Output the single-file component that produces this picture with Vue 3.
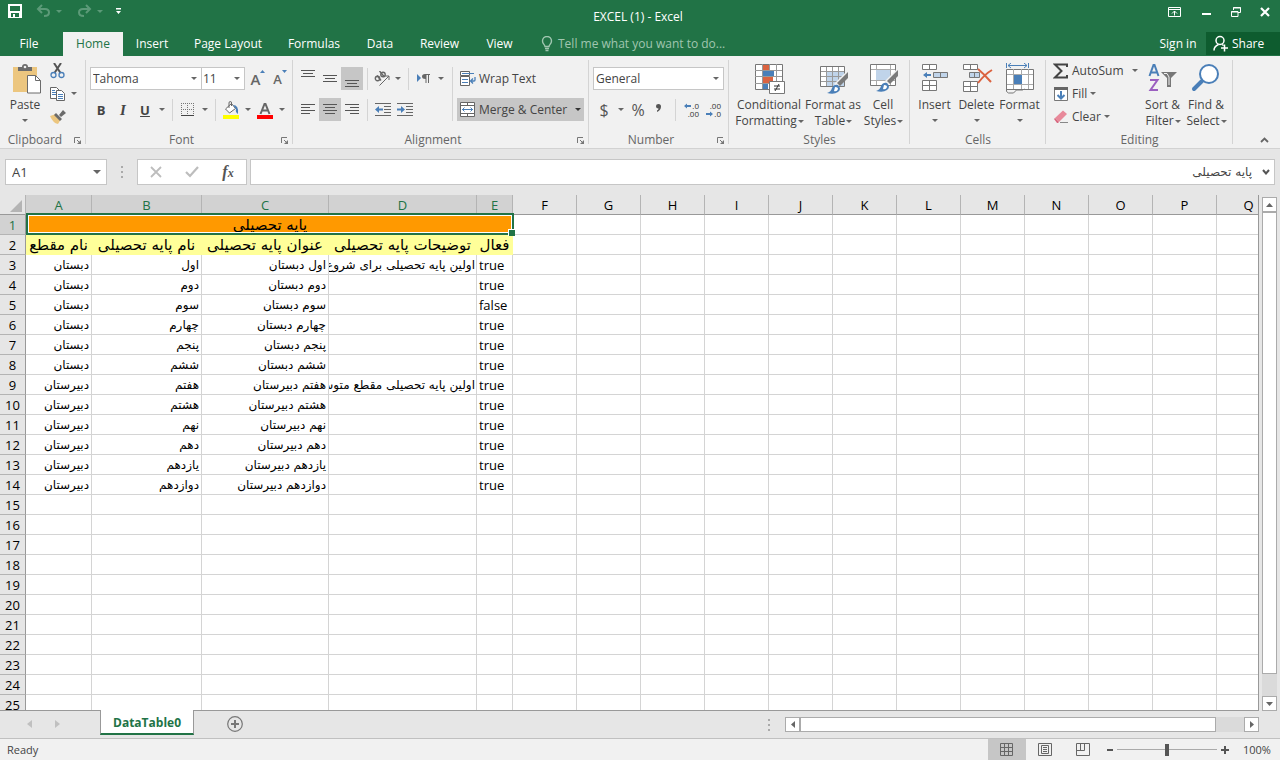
<script setup>
import { ref } from 'vue'

const tabs = ['Home', 'Insert', 'Page Layout', 'Formulas', 'Data', 'Review', 'View']
const columns = 'ABCDEFGHIJKLMNOPQ'.split('')
const title = 'پایه تحصیلی'
const headings = ['نام مقطع', 'نام پایه تحصیلی', 'عنوان پایه تحصیلی', 'توضیحات پایه تحصیلی', 'فعال']
const primary = 'دبستان'
const secondary = 'دبیرستان'
const grades = [
  ['اول', primary, 'اولین پایه تحصیلی برای شروع', 'true'],
  ['دوم', primary, '', 'true'],
  ['سوم', primary, '', 'false'],
  ['چهارم', primary, '', 'true'],
  ['پنجم', primary, '', 'true'],
  ['ششم', primary, '', 'true'],
  ['هفتم', secondary, 'اولین پایه تحصیلی مقطع متوسطه', 'true'],
  ['هشتم', secondary, '', 'true'],
  ['نهم', secondary, '', 'true'],
  ['دهم', secondary, '', 'true'],
  ['یازدهم', secondary, '', 'true'],
  ['دوازدهم', secondary, '', 'true'],
]
const records = grades.map(([name, school, note, active]) => [school, name, `${name} ${school}`, note, active])
const emptyRows = Array.from({ length: 11 }, (_, i) => i + 15)

const font = ref('Tahoma')
const size = ref('11')
const format = ref('General')
const cellName = ref('A1')
const formula = ref(title)
const zoom = ref(100)
</script>

<template>
  <div class="app">
    <header class="top">
      <div class="titlebar">
        <div class="quick">
          <button class="q-save" aria-label="Save">
            <svg width="14" height="14" viewBox="0 0 14 14"><path d="M0 0h14v14H0zM2 2v5h10V2zM3 9v4h2v-3h2v3h4V9z" fill="#fff" fill-rule="evenodd" /></svg>
          </button>
          <button class="q-undo" aria-label="Undo">
            <svg width="15" height="14" viewBox="0 0 15 14" fill="none" stroke="#5c9a78" stroke-width="2"><path d="M6 1 2 5l4 4M2 5h7q4 0 4 3.500t-5 3.500" /></svg>
          </button>
          <i class="caret dim" />
          <button class="q-redo" aria-label="Redo">
            <svg width="15" height="14" viewBox="0 0 15 14" fill="none" stroke="#5c9a78" stroke-width="2"><path d="M9 1l4 4-4 4M13 5H6Q2 5 2 8.500T7 12" /></svg>
          </button>
          <i class="caret dim" />
          <button class="q-more" aria-label="Customize Quick Access Toolbar">
            <svg width="7" height="7" viewBox="0 0 7 7" fill="#fff"><path d="M1 0h5v1.500H1zM1 3h5L3.500 6z" /></svg>
          </button>
        </div>
        <h1>EXCEL (1) - Excel</h1>
        <div class="window">
          <button aria-label="Ribbon Display Options">
            <svg width="14" height="12" viewBox="0 0 14 12" fill="none" stroke="#fff"><path d="M.5 1.500h12v9H.5zM.5 3.500h12M6.500 9.500V5M4 7.500 6.500 5 9 7.500" /></svg>
          </button>
          <button aria-label="Minimize"><svg width="14" height="12" viewBox="0 0 14 12"><path d="M2 7h9v2H2z" fill="#fff" /></svg></button>
          <button aria-label="Restore">
            <svg width="14" height="12" viewBox="0 0 14 12" fill="none" stroke="#fff"><path d="M4.500 4V1.500h7v5H9M4 2h8M2.500 5.500H9v5H2.500zM2 6h7" /></svg>
          </button>
          <button aria-label="Close"><svg width="14" height="12" viewBox="0 0 14 12"><path d="m3 2 8 8m0-8-8 8" stroke="#fff" stroke-width="2.200" /></svg></button>
        </div>
      </div>
      <nav class="tabs">
        <button class="file">File</button>
        <div class="tablist">
          <button v-for="(tab, i) in tabs" :key="tab" :class="{ active: i === 0 }">{{ tab }}</button>
        </div>
        <button class="tell">
          <svg width="12" height="16" viewBox="0 0 12 16" fill="none" stroke="#a0c6b0" stroke-width="1.400"><path d="M4 10.500C4 8.500 1.500 8 1.500 5a4.500 4.500 0 0 1 9 0c0 3-2.500 3.500-2.500 5.500zM4 12.500h4M4.500 14.500h3" /></svg>
          <span>Tell me what you want to do...</span>
        </button>
        <button class="signin">Sign in</button>
        <button class="share">
          <svg width="16" height="17" viewBox="0 0 16 17" fill="none" stroke="#fff" stroke-width="1.500"><circle cx="7" cy="5.500" r="4" /><path d="M1 15.500c0-3 2-5 4.500-6M9 9.500l1.500 1M11.500 9.500v7M8 13h7" /></svg>
          <span>Share</span>
        </button>
      </nav>
    </header>

    <section class="ribbon">
      <div class="group g-clipboard">
        <div class="body">
          <button class="big">
            <svg width="32" height="32" viewBox="0 0 32 32"><path d="M4 4h24v25H4z" fill="#ecc67f" /><path d="M9 8V4h4q0-3 3-3t3 3h4v4z" fill="#6b6b6b" /><circle cx="16" cy="4" r="1.300" fill="#f1f1f1" /><path d="M18.500 12.500h8l5 5v12.500h-13z" fill="#fff" stroke="#6b6b6b" /><path d="M26.500 12.500v5h5" fill="none" stroke="#6b6b6b" /></svg>
            <span>Paste</span><i class="caret" />
          </button>
          <div class="stack">
            <div><button class="mini" aria-label="Cut">
              <svg width="16" height="16" viewBox="0 0 16 16" fill="none"><path d="m4 0 6.500 10M11 0 4.500 10" stroke="#555" stroke-width="2" /><circle cx="3.500" cy="12" r="2.500" stroke="#4a7fb8" stroke-width="1.300" /><circle cx="11.500" cy="12" r="2.500" stroke="#4a7fb8" stroke-width="1.300" /></svg>
            </button></div>
            <div><button class="mini" aria-label="Copy">
              <svg width="16" height="16" viewBox="0 0 16 16"><path d="M.5 1.500h6l3 3v8h-9z" fill="#fff" stroke="#666" /><path d="M2 4.500h3m-3 2h4m-4 2h4" stroke="#4a7fb8" /><path d="M6.500 4.500h5l3 3v7h-8z" fill="#fff" stroke="#666" /><path d="M8 8.500h5m-5 2h5m-5 2h5" stroke="#4a7fb8" /></svg>
            </button><i class="caret" /></div>
            <div><button class="mini" aria-label="Format Painter">
              <svg width="16" height="16" viewBox="0 0 16 16"><path d="M0 7 6 5l5 5-3 5q-5-1-8-8z" fill="#ecc67f" /><path d="m6 4 6 6-2 2-6-6zM9 6l4-5 3 3-5 4z" fill="#6b6b6b" /></svg>
            </button></div>
          </div>
        </div>
        <footer><span>Clipboard</span><svg class="launch" width="8" height="8" viewBox="0 0 8 8"><path d="M.5 6V.5H6M3 3l3 3" fill="none" stroke="#777" /><path d="M7 3v4H3z" fill="#777" /></svg></footer>
      </div>

      <div class="group g-font">
        <div class="body lines">
          <div class="line">
            <label class="combo c-font"><select v-model="font" aria-label="Font"><option>Tahoma</option></select><i class="caret" /></label>
            <label class="combo c-size"><select v-model="size" aria-label="Font size"><option>11</option></select><i class="caret" /></label>
            <button class="tool grow" aria-label="Increase Font Size"><b class="fa">A</b><svg width="5" height="3" viewBox="0 0 5 3"><path d="M0 3h5L2.500 0z" fill="#4a7fb8" /></svg></button>
            <button class="tool grow small" aria-label="Decrease Font Size"><b class="fa">A</b><svg width="5" height="3" viewBox="0 0 5 3"><path d="M0 0h5L2.500 3z" fill="#4a7fb8" /></svg></button>
          </div>
          <div class="line">
            <button class="tool"><b>B</b></button>
            <button class="tool"><em>I</em></button>
            <button class="tool"><b><u>U</u></b></button>
            <i class="caret" /><i class="sep" />
            <button class="tool" aria-label="Borders">
              <svg width="14" height="14" viewBox="0 0 14 14"><path d="M.5 0v12M6.500 0v12M12.500 0v12M0 .5h13M0 6.500h13" stroke="#777" stroke-dasharray="1 1" /><path d="M0 12.500h13" stroke="#444" /></svg>
            </button>
            <i class="caret" /><i class="sep" />
            <button class="tool" aria-label="Fill Color">
              <svg width="16" height="18" viewBox="0 0 16 18"><path d="m2.500 8 6-5.500 4 5L6.500 12z" fill="#fff" stroke="#666" /><path d="M6 7V2q0-1.500 1.300-1.500T8.500 2v3" fill="none" stroke="#666" /><path d="M10 4q6 0 5 9-3-2-2-5z" fill="#4a7fb8" /><path d="M0 14h16v4H0z" fill="#ff0" /></svg>
            </button>
            <i class="caret" />
            <button class="tool" aria-label="Font Color">
              <svg width="16" height="18" viewBox="0 0 16 18"><path d="m3.500 13 4-10h1l4 10M5 9.500h6" fill="none" stroke="#666" stroke-width="2" /><path d="M0 14h16v4H0z" fill="#f00" /></svg>
            </button>
            <i class="caret" />
          </div>
        </div>
        <footer><span>Font</span><svg class="launch" width="8" height="8" viewBox="0 0 8 8"><path d="M.5 6V.5H6M3 3l3 3" fill="none" stroke="#777" /><path d="M7 3v4H3z" fill="#777" /></svg></footer>
      </div>

      <div class="group g-align">
        <div class="body lines">
          <div class="line">
            <div class="alignleft">
              <div class="line">
                <button class="tool" aria-label="Top Align"><svg width="14" height="18" viewBox="0 0 14 18" stroke="#555"><path d="M0 .5h14M2 3.500h10M0 6.500h14" /></svg></button>
                <button class="tool" aria-label="Middle Align"><svg width="14" height="18" viewBox="0 0 14 18" stroke="#555"><path d="M0 5.500h14M2 8.500h10M0 11.500h14" /></svg></button>
                <button class="tool on" aria-label="Bottom Align"><svg width="14" height="18" viewBox="0 0 14 18" stroke="#555"><path d="M0 10.500h14M2 13.500h10M0 16.500h14" /></svg></button>
                <i class="sep" />
                <button class="tool orient" aria-label="Orientation">
                  <svg width="16" height="15" viewBox="0 0 16 15" fill="none" stroke="#666"><path d="M5.500 14.500 15 5M11 5h4v4" /><circle cx="3.500" cy="7.500" r="2.200" stroke-width="1.400" /><path d="m3 4.500 4 5M5.500 0l5 6" stroke-width="1.400" /><circle cx="9" cy="3.500" r="2.200" stroke-width="1.400" /></svg>
                </button>
                <i class="caret" /><i class="sep" />
                <button class="tool" aria-label="Text Direction">
                  <svg width="14" height="12" viewBox="0 0 14 12"><path d="M0 1v8l4-4z" fill="#4a7fb8" /><path d="M5 3.500Q5 1 8 1h5v1h-1v8h-1V2H9.500v8h-1V6Q5 6 5 3.500z" fill="#666" /></svg>
                </button>
                <i class="caret" />
              </div>
              <div class="line">
                <button class="tool" aria-label="Align Left"><svg width="14" height="14" viewBox="0 0 14 14" stroke="#555"><path d="M0 1.500h14M0 4.500h9M0 7.500h14M0 10.500h9" /></svg></button>
                <button class="tool on" aria-label="Center"><svg width="14" height="14" viewBox="0 0 14 14" stroke="#555"><path d="M0 1.500h14M2 4.500h10M0 7.500h14M2 10.500h10" /></svg></button>
                <button class="tool" aria-label="Align Right"><svg width="14" height="14" viewBox="0 0 14 14" stroke="#555"><path d="M0 1.500h14M5 4.500h9M0 7.500h14M5 10.500h9" /></svg></button>
                <i class="sep" />
                <button class="tool" aria-label="Decrease Indent"><svg width="16" height="14" viewBox="0 0 16 14"><path d="M0 .5h16M9 3.500h7M9 6.500h7M9 9.500h7M0 12.500h16" stroke="#666" /><path d="M0 6.500 4 3v2.500h4v2H4V10z" fill="#4a7fb8" /></svg></button>
                <button class="tool" aria-label="Increase Indent"><svg width="16" height="14" viewBox="0 0 16 14"><path d="M0 .5h16M9 3.500h7M9 6.500h7M9 9.500h7M0 12.500h16" stroke="#666" /><path d="M8 6.500 4 3v2.500H0v2h4V10z" fill="#4a7fb8" /></svg></button>
              </div>
            </div>
            <i class="sep tall" />
            <div class="alignright">
              <button class="wide">
                <svg width="16" height="16" viewBox="0 0 16 16"><path d="M.5.500h9v4h-9zM.5 5.500h9v9h-9z" fill="#fff" stroke="#666" /><path d="M2 2.500h12M2 8.500h6M2 11.500h6" stroke="#4a7fb8" /><path d="M15 6v3q0 1-1 1h-3m2-2.500L10.500 10l2.500 2.500" fill="none" stroke="#4a7fb8" stroke-width="1.300" /></svg>
                <span>Wrap Text</span>
              </button>
              <button class="wide on">
                <svg width="16" height="16" viewBox="0 0 16 16"><path d="M.5.500h14v14H.5z" fill="#fff" stroke="#666" /><path d="M0 3.500h15M0 11.500h15M7.500 0v3.500M7.500 11.500V15" stroke="#666" /><path d="M2 7.500h11M4.500 5.500l-2 2 2 2m6-4 2 2-2 2" fill="none" stroke="#4a7fb8" /></svg>
                <span>Merge &amp; Center</span><i class="caret dark" />
              </button>
            </div>
          </div>
        </div>
        <footer><span>Alignment</span><svg class="launch" width="8" height="8" viewBox="0 0 8 8"><path d="M.5 6V.5H6M3 3l3 3" fill="none" stroke="#777" /><path d="M7 3v4H3z" fill="#777" /></svg></footer>
      </div>

      <div class="group g-number">
        <div class="body lines">
          <div class="line"><label class="combo c-format"><select v-model="format" aria-label="Number format"><option>General</option></select><i class="caret" /></label></div>
          <div class="line">
            <button class="tool sym">$</button><i class="caret" />
            <button class="tool sym">%</button>
            <button class="tool comma" aria-label="Comma Style"><svg width="6" height="12" viewBox="0 0 6 12"><path d="M0 2q0-2 2.500-2T5 2.500Q5 6 1 8V6.500Q2.500 6 2.500 4.500 0 4.500 0 2z" fill="#555" /></svg></button>
            <i class="sep" />
            <button class="tool dec" aria-label="Increase Decimal"><span><svg width="8" height="6" viewBox="0 0 8 6"><path d="M0 3 3 .5V2h4v2H3v1.500z" fill="#4a7fb8" /></svg>.0</span><span>.00</span></button>
            <button class="tool dec" aria-label="Decrease Decimal"><span>.00</span><span><svg width="8" height="6" viewBox="0 0 8 6"><path d="M7 3 4 .5V2H0v2h4v1.500z" fill="#4a7fb8" /></svg>.0</span></button>
          </div>
        </div>
        <footer><span>Number</span><svg class="launch" width="8" height="8" viewBox="0 0 8 8"><path d="M.5 6V.5H6M3 3l3 3" fill="none" stroke="#777" /><path d="M7 3v4H3z" fill="#777" /></svg></footer>
      </div>

      <div class="group g-styles">
        <div class="body">
          <button class="big">
            <svg width="32" height="32" viewBox="0 0 32 32"><path d="M2.500 1.500h27v25h-27z" fill="#fff" stroke="#777" /><path d="M9.500 1v25M16.500 1v25M23.500 1v25M2 7.500h27M2 13.500h27M2 20.500h27" stroke="#999" /><path d="M10 2h6v5h-6zM10 14h10v6H10z" fill="#db6340" /><path d="M10 8h11v5H10zM10 21h5v5h-5z" fill="#4a7fb8" /><path d="M16.500 18.500h15v12h-15z" fill="#fff" stroke="#777" /><path d="M21 23h6m-6 3h6m-1-5-4 7" stroke="#333" /></svg>
            <span>Conditional</span><span>Formatting<i class="caret" /></span>
          </button>
          <button class="big">
            <svg width="32" height="32" viewBox="0 0 32 32"><path d="M3.500 3.500h24v20h-24z" fill="#fff" stroke="#777" /><path d="M10 9h17v14H10z" fill="#c0d4ea" /><path d="M9.500 4v19M15.500 4v19M21.500 4v19M4 8.500h23M4 13.500h23M4 18.500h23" stroke="#999" /><path d="m17 21 12-12 3-3v7l-11 11z" fill="#f1f1f1" /><path d="m20 20 11-11v6l-8 8z" fill="#7a7a7a" /><path d="M10 30q4-1 5-5 2-4 6-3 4 4 0 7-4 3-11 1z" fill="#4a7fb8" /><path d="M18 24q3 0 3 2-1 3-4 2z" fill="#fff" /></svg>
            <span>Format as</span><span>Table<i class="caret" /></span>
          </button>
          <button class="big">
            <svg width="32" height="32" viewBox="0 0 32 32"><path d="M3.500 1.500h25v21h-25z" fill="#fff" stroke="#777" /><path d="M9.500 2v20M23.500 2v20M4 6.500h24M4 17.500h24" stroke="#aaa" /><path d="M9 7h14v10H9z" fill="#c0d4ea" /><path d="m17 19 12-12 3-3v7l-11 11z" fill="#f1f1f1" /><path d="m20 18 11-11v6l-8 8z" fill="#7a7a7a" /><path d="M9 28q4-1 5-5 2-4 6-3 4 4 0 7-4 3-11 1z" fill="#4a7fb8" /><path d="M17 22q3 0 3 2-1 3-4 2z" fill="#fff" /></svg>
            <span>Cell</span><span>Styles<i class="caret" /></span>
          </button>
        </div>
        <footer><span>Styles</span></footer>
      </div>

      <div class="group g-cells">
        <div class="body">
          <button class="big">
            <svg width="32" height="32" viewBox="0 0 32 32" stroke="#777"><path d="M3.500 1.500h14v5h-14zM3.500 17.500h14v10h-14z" fill="#fff" /><path d="M10.500 1.500v5M10.500 17.500v10M3.500 22.500h14" /><path d="M14.500 9.500h14v5h-14z" fill="#c0d4ea" /><path d="M21.500 9.500v5" /><path d="M4 12 8 9v2h4v2H8v2z" fill="#4a7fb8" stroke="none" /></svg>
            <span>Insert</span><i class="caret" />
          </button>
          <button class="big">
            <svg width="32" height="32" viewBox="0 0 32 32" stroke="#777"><path d="M2.500 1.500h14v5h-14zM2.500 18.500h14v10h-14z" fill="#fff" /><path d="M9.500 1.500v5M9.500 18.500v10M2.500 23.500h14" /><path d="M8.500 9.500h10v5h-10z" fill="#c0d4ea" /><path d="M13.500 9.500v5" /><path d="M17 6q6 5 13 13M31 7q-7 4-14 13" fill="none" stroke="#db6340" stroke-width="2" /></svg>
            <span>Delete</span><i class="caret" />
          </button>
          <button class="big">
            <svg width="32" height="32" viewBox="0 0 32 32"><path d="M2.500 6.500h27v20h-27z" fill="#fff" stroke="#777" /><path d="M9.500 6v20M17.500 6v20M24.500 6v20M3 11.500h26M3 21.500h26" stroke="#aaa" /><path d="M10 12h8v9h-8z" fill="#4a7fb8" /><path d="M2.500 0v5M24.500 0v5M4 2.500h19M7 0 4 2.500 7 5M20 0l3 2.500L20 5" fill="none" stroke="#4a7fb8" /><path d="M2.500 26q-1 3 2 4h5l3-3h6l2-1" fill="none" stroke="#777" /></svg>
            <span>Format</span><i class="caret" />
          </button>
        </div>
        <footer><span>Cells</span></footer>
      </div>

      <div class="group g-editing">
        <div class="body">
          <div class="edits">
            <button class="edit auto">
              <svg width="16" height="16" viewBox="0 0 16 16"><path d="M14 4V1.500H2L8.500 8 2 14.500h12V12" fill="none" stroke="#444" stroke-width="2" /></svg>
              <span>AutoSum</span><i class="caret" />
            </button>
            <button class="edit">
              <svg width="16" height="16" viewBox="0 0 16 16"><path d="M1.500 1.500h13v13h-13z" fill="#fff" stroke="#777" /><path d="M1 1h14v3H1z" fill="#666" /><path d="M8 5v8M4.500 9 8 12.500 11.500 9" fill="none" stroke="#4a7fb8" stroke-width="2" /></svg>
              <span>Fill</span><i class="caret" />
            </button>
            <button class="edit">
              <svg width="16" height="16" viewBox="0 0 16 16"><path d="m2 9 8-7.500L14 5l-8 8z" fill="#e8899a" /><path d="m1 10 1-1 4 4-1 1H4z" fill="#d8677f" /><path d="M7 13.500h8" stroke="#888" /></svg>
              <span>Clear</span><i class="caret" />
            </button>
          </div>
          <button class="big">
            <svg width="32" height="32" viewBox="0 0 32 32" fill="none"><path d="M2.500 13 6.500 2h1l4 11M4 9.500h6" stroke="#4a7fb8" stroke-width="2" /><path d="M3 17h7.500L3.500 27H11" stroke="#9b5fc0" stroke-width="2" /><path d="M14 9h16l-6 6v9h-4v-9z" fill="#777" /><path d="M17 10.500h3l2 3.500v8" stroke="#f1f1f1" /></svg>
            <span>Sort &amp;</span><span>Filter<i class="caret" /></span>
          </button>
          <button class="big">
            <svg width="32" height="32" viewBox="0 0 32 32"><path d="m4 26 8-8" stroke="#4a7fb8" stroke-width="4" stroke-linecap="round" /><circle cx="19" cy="11" r="9" fill="#fff" stroke="#4a7fb8" stroke-width="2" /></svg>
            <span>Find &amp;</span><span>Select<i class="caret" /></span>
          </button>
        </div>
        <footer><span>Editing</span></footer>
      </div>
      <button class="collapse" aria-label="Collapse the Ribbon"><svg width="9" height="6" viewBox="0 0 9 6"><path d="m1 5 3.500-3.500L8 5" fill="none" stroke="#666" stroke-width="1.800" /></svg></button>
    </section>

    <section class="formulabar">
      <label class="namebox"><input v-model="cellName" aria-label="Name box" /><i class="caret big-caret" /></label>
      <i class="dots" />
      <div class="entry">
        <button aria-label="Cancel"><svg width="12" height="12" viewBox="0 0 12 12"><path d="m1 1 10 10m0-10L1 11" stroke="#bdbdbd" stroke-width="1.800" /></svg></button>
        <button aria-label="Enter"><svg width="14" height="12" viewBox="0 0 14 12"><path d="m1 6 4 4 8-9" fill="none" stroke="#bdbdbd" stroke-width="2.200" /></svg></button>
        <button class="fx" aria-label="Insert Function"><em>f<small>x</small></em></button>
      </div>
      <div class="formula">
        <input v-model="formula" dir="rtl" aria-label="Formula" />
        <svg width="8" height="6" viewBox="0 0 8 6"><path d="m1 1 3 3.500L7 1" fill="none" stroke="#555" stroke-width="2" /></svg>
      </div>
    </section>

    <main class="sheet">
      <div class="viewport">
        <table>
          <colgroup><col class="w-head" /><col class="w-a" /><col class="w-b" /><col class="w-c" /><col class="w-d" /><col class="w-e" /><col v-for="n in 12" :key="n" class="w-rest" /></colgroup>
          <thead>
            <tr>
              <th class="corner"><svg width="12" height="12" viewBox="0 0 12 12"><path d="M12 0v12H0z" fill="#b4b4b4" /></svg></th>
              <th v-for="(c, i) in columns" :key="c" scope="col" :class="{ sel: i < 5 }">{{ c }}</th>
            </tr>
          </thead>
          <tbody>
            <tr>
              <th scope="row" class="sel">1</th>
              <td colspan="5" class="title" dir="rtl">{{ title }}<div class="selection" /></td>
              <td v-for="n in 12" :key="n" />
            </tr>
            <tr class="heads">
              <th scope="row">2</th>
              <td v-for="h in headings" :key="h" class="heading" dir="rtl">{{ h }}</td>
              <td v-for="n in 12" :key="n" />
            </tr>
            <tr v-for="(r, i) in records" :key="i">
              <th scope="row">{{ i + 3 }}</th>
              <td v-for="(v, j) in r" :key="j" :dir="j < 4 ? 'rtl' : 'ltr'" :class="{ fa: j < 4 }">{{ v }}</td>
              <td v-for="n in 12" :key="'e' + n" />
            </tr>
            <tr v-for="n in emptyRows" :key="'r' + n">
              <th scope="row">{{ n }}</th>
              <td v-for="m in 17" :key="m" />
            </tr>
          </tbody>
        </table>
      </div>
      <div class="vscroll">
        <button aria-label="Scroll up"><svg width="7" height="4" viewBox="0 0 7 4"><path d="M0 4h7L3.500 0z" fill="#666" /></svg></button>
        <div class="thumb" />
        <div class="track" />
        <button aria-label="Scroll down"><svg width="7" height="4" viewBox="0 0 7 4"><path d="M0 0h7L3.500 4z" fill="#666" /></svg></button>
      </div>
    </main>

    <section class="sheetbar">
      <div class="nav">
        <button aria-label="Previous sheet"><svg width="5" height="8" viewBox="0 0 5 8"><path d="M5 0v8L0 4z" fill="#c0c0c0" /></svg></button>
        <button aria-label="Next sheet"><svg width="5" height="8" viewBox="0 0 5 8"><path d="M0 0v8l5-4z" fill="#c0c0c0" /></svg></button>
      </div>
      <button class="sheettab">DataTable0</button>
      <button class="add" aria-label="New sheet"><svg width="16" height="16" viewBox="0 0 16 16" fill="none" stroke="#777"><circle cx="8" cy="8" r="7.300" stroke-width="1.200" /><path d="M8 4v8M4 8h8" stroke-width="2" /></svg></button>
      <i class="dots" />
      <div class="hscroll">
        <button aria-label="Scroll left"><svg width="4" height="7" viewBox="0 0 4 7"><path d="M4 0v7L0 3.500z" fill="#666" /></svg></button>
        <div class="thumb" />
        <div class="track" />
        <button aria-label="Scroll right"><svg width="4" height="7" viewBox="0 0 4 7"><path d="M0 0v7l4-3.500z" fill="#666" /></svg></button>
      </div>
    </section>

    <footer class="status">
      <span class="ready">Ready</span>
      <button class="view on" aria-label="Normal"><svg width="14" height="14" viewBox="0 0 14 14" fill="none" stroke="#666"><path d="M.5.500h12v12H.5zM4.500 0v13M8.500 0v13M0 4.500h13M0 8.500h13" /></svg></button>
      <button class="view" aria-label="Page Layout"><svg width="14" height="14" viewBox="0 0 14 14" fill="none" stroke="#666"><path d="M.5.500h13v12H.5zM3.500 2.500h7v8h-7zM5 4.500h4M5 6.500h4M5 8.500h4" /></svg></button>
      <button class="view" aria-label="Page Break Preview"><svg width="14" height="14" viewBox="0 0 14 14" fill="none" stroke="#666"><path d="M.5.500h13v12H.5zM.5 7.500h8V.5M4.500.500v7" /></svg></button>
      <button class="step" aria-label="Zoom out"><svg width="8" height="8" viewBox="0 0 8 8"><path d="M1 3h6v2H1z" fill="#555" /></svg></button>
      <input v-model="zoom" type="range" min="0" max="200" aria-label="Zoom" />
      <button class="step" aria-label="Zoom in"><svg width="8" height="8" viewBox="0 0 8 8"><path d="M0 3h8v2H0zM3 0h2v8H3z" fill="#555" /></svg></button>
      <span class="pct">{{ zoom }}%</span>
    </footer>
  </div>
</template>

<style>
body { margin: 0; background: #e6e6e6; }
</style>

<style scoped>
* { box-sizing: border-box; }
.app { display: flex; flex-direction: column; height: 100vh; overflow: hidden; font: 12px/16px "Open Sans", "Noto Sans", sans-serif; color: #444; background: #e6e6e6; }
button, select, input { font: inherit; color: inherit; border: 0; padding: 0; margin: 0; background: none; border-radius: 0; outline: 0; }
button { display: flex; align-items: center; justify-content: center; white-space: nowrap; }
svg { display: block; flex: none; }
.caret { flex: none; width: 12px; display: flex; justify-content: center; }
.caret::before { content: ""; border: 3px solid transparent; border-top-color: #666; border-bottom: 0; }
.caret.dim::before { border-top-color: #5c9a78; }
.caret.dark::before { border-top-color: #333; }

.top { flex: none; background: #217346; color: #fff; }
.titlebar { display: grid; grid-template-columns: 1fr auto 1fr; height: 32px; }
.quick { display: flex; align-items: center; height: 22px; padding-left: 8px; }
.q-undo { margin-left: 14px; }
.q-undo + .caret { margin-left: 2px; }
.q-redo { margin-left: 12px; }
.q-redo + .caret { margin-left: 2px; }
.q-more { margin-left: 9px; }
h1 { margin: 9px 4px 0 0; font-size: 12px; line-height: 16px; font-weight: 400; }
.window { display: flex; justify-content: flex-end; height: 23px; padding-right: 8px; gap: 15px; }
.window button:first-child { margin-right: 3px; }
.tabs { display: flex; height: 24px; }
.file { width: 58px; }
.tablist { display: grid; grid-template-columns: 60px 58px 94px 78px 54px 65px 55px; margin-left: 5px; }
.tablist .active { background: #f1f1f1; color: #217346; }
.tell { margin-left: 14px; gap: 5px; color: #a0c6b0; }
.signin { margin-left: auto; width: 56px; }
.share { width: 74px; height: 23px; background: #0e5c2f; justify-content: flex-start; padding-left: 7px; gap: 3px; }

.ribbon { flex: none; display: flex; height: 93px; background: #f1f1f1; border-bottom: 1px solid #d2d2d2; }
.group { position: relative; flex: none; display: flex; flex-direction: column; }
.group::after { content: ""; position: absolute; right: 0; top: 4px; bottom: 4px; width: 1px; background: #d4d4d4; }
.body { flex: 1; display: flex; height: 76px; }
.group footer { display: flex; align-items: center; justify-content: center; height: 16px; color: #666; }
.group footer span { margin: 0 auto; }
.launch { margin: 2px 4px 0 -12px; }
.g-clipboard { width: 86px; }
.g-clipboard footer span, .g-font footer span, .g-align footer span, .g-number footer span { padding-right: 20px; }
.g-clipboard footer span { padding-right: 16px; }
.g-font { width: 207px; padding-left: 4px; }
.g-align { width: 296px; padding-left: 4px; }
.g-number { width: 140px; padding-left: 4px; }
.g-styles { width: 181px; padding: 0 4px; }
.g-styles .body { display: grid; grid-template-columns: 72px 56px 44px; }
.g-cells { width: 136px; padding: 0 4px; }
.g-cells .body { display: grid; grid-template-columns: 41px 43px 43px; }
.g-editing { width: 187px; padding: 0 4px; }
.g-editing .body { display: grid; grid-template-columns: 91px 43px 44px; }
.big { flex-direction: column; justify-content: flex-start; padding-top: 7px; }
.big svg { margin-bottom: 2px; }
.big span { display: flex; align-items: center; height: 16px; }
.big span .caret { width: 8px; margin-right: -2px; }
.big > .caret { height: 14px; align-items: center; }
.g-clipboard .big { width: 50px; }
.stack, .edits { display: flex; flex-direction: column; padding-top: 3px; }
.stack div, .edit { display: flex; align-items: center; height: 23px; }
.stack .caret { margin-left: 2px; }
.edit { justify-content: flex-start; padding-left: 3px; gap: 3px; }
.edit .caret { margin-left: -3px; }
.edit.auto .caret { margin-left: auto; }
.lines { flex-direction: column; gap: 8px; padding-top: 11px; }
.line { display: flex; align-items: center; min-height: 23px; }
.combo { display: flex; align-items: center; height: 23px; background: #fff; border: 1px solid #c6c6c6; }
.combo select { flex: 1; min-width: 0; height: 21px; padding: 0 0 0 2px; appearance: none; }
.combo .caret { width: 14px; }
.c-font { width: 112px; }
.c-size { width: 44px; margin-left: -1px; }
.c-size select { padding-left: 1px; }
.c-format { width: 131px; }
.tool { flex: none; width: 22px; height: 23px; color: #555; }
.tool b, .tool em { font-size: 13px; color: #444; }
.tool em { font-family: "Liberation Serif", serif; font-weight: 700; font-size: 15px; }
.on { background: #c6c6c6; }
.orient { width: 20px; }
.grow { align-items: flex-start; padding-top: 3px; }
.c-size + .grow { margin-left: 2px; }
.tool .fa { font-size: 15px; line-height: 18px; font-weight: 600; color: #666; }
.small .fa { font-size: 13px; }
.sep { flex: none; width: 1px; height: 22px; margin: 0 4px; background: #d4d4d4; }
.tall { height: 54px; }
.alignleft { display: flex; flex-direction: column; gap: 8px; width: 151px; }
.alignright { display: flex; flex-direction: column; gap: 8px; width: 127px; }
.wide { height: 23px; padding-left: 3px; gap: 3px; justify-content: flex-start; }
.wide .caret { margin-left: auto; width: 15px; }
.sym { font-size: 16px; }
.comma { width: 20px; margin-right: 2px; }
.dec { width: 21px; flex-direction: column; align-items: flex-end; padding-right: 2px; font-size: 8px; line-height: 8px; color: #333; }
.dec + .dec { margin-left: 1px; }
.dec span { display: flex; align-items: center; }
.collapse { align-self: flex-end; margin: 0 11px 5px auto; }

.formulabar { flex: none; display: flex; padding: 10px 5px; }
.namebox { display: flex; align-items: center; width: 102px; height: 26px; background: #fff; border: 1px solid #c6c6c6; }
.namebox input { flex: 1; min-width: 0; padding-left: 6px; font-size: 13px; }
.namebox .caret { width: 18px; }
.big-caret::before { border-width: 4px 4px 0; }
.dots { width: 2px; height: 12px; align-self: center; background: repeating-linear-gradient(#aaa 0 2px, transparent 2px 5px); }
.formulabar .dots { margin: 0 14px; }
.entry { display: grid; grid-template-columns: repeat(3, 36px); width: 110px; height: 26px; background: #fff; border: 1px solid #c6c6c6; }
.fx em { font: italic 700 16px/16px "Liberation Serif", serif; color: #555; }
.fx small { font-size: 12px; }
.formula { flex: 1; display: flex; align-items: center; height: 26px; margin-left: 3px; background: #fff; border: 1px solid #c6c6c6; padding-right: 4px; }
.formula input { flex: 1; min-width: 0; height: 24px; padding: 0 10px; font: 12px/16px "DejaVu Sans", sans-serif; }

.sheet { flex: 1; min-height: 0; display: flex; }
.viewport { flex: 1; min-width: 0; overflow: hidden; border-right: 1px solid #999; border-bottom: 1px solid #999; background: #e6e6e6; }
table { width: 1281px; table-layout: fixed; border-collapse: separate; border-spacing: 0; color: #000; font-size: 13px; }
.w-head { width: 26px; } .w-a { width: 66px; } .w-b { width: 110px; } .w-c { width: 127px; } .w-d { width: 148px; } .w-e { width: 36px; } .w-rest { width: 64px; }
th { height: 20px; padding: 1px 0 0; font-weight: 400; line-height: 18px; background: #e6e6e6; border-right: 1px solid #b4b4b4; border-bottom: 1px solid #b4b4b4; }
thead th { border-bottom-color: #999; }
tbody th { border-right-color: #999; }
th.sel { background: #d2d2d2; color: #217346; }
.corner svg { margin: 2px 0 0 10px; }
td { height: 20px; padding: 1px 2px 0; line-height: 18px; background: #fff; border-right: 1px solid #d4d4d4; border-bottom: 1px solid #d4d4d4; white-space: nowrap; overflow: hidden; }
td.fa { font: 12px/18px "DejaVu Sans", sans-serif; }
.title, .heading { font: 15px/18px "DejaVu Sans", sans-serif; text-align: center; }
.title { position: relative; overflow: visible; background: #f90; }
.heading { padding-top: 0; background: #ff9; border-color: #ff9; }
.selection { position: absolute; inset: -2px -1px -1px -1px; border: 2px solid #217346; box-shadow: inset 0 0 0 1px #fff; }
.selection::after { content: ""; position: absolute; right: -3px; bottom: -3px; width: 6px; height: 6px; background: #217346; border: solid #fff; border-width: 1px 0 0 1px; }
.vscroll { display: flex; flex-direction: column; width: 15px; margin: 2px 3px 0; }
.vscroll button, .hscroll button { flex: none; width: 15px; height: 15px; background: #fff; border: 1px solid #ababab; }
.thumb { background: #fff; border: 1px solid #ababab; }
.track { background: #dadada; }
.vscroll .thumb { flex: 463; }
.vscroll .track { flex: 22; }

.sheetbar { flex: none; display: flex; height: 28px; padding-right: 21px; border-bottom: 1px solid #c0c0c0; }
.nav { display: flex; align-items: center; width: 100px; padding: 0 0 2px 27px; gap: 23px; }
.sheettab { width: 94px; height: 25px; margin-top: -1px; padding-top: 2px; z-index: 1; background: #fff; border: solid #999; border-width: 0 1px; border-bottom: 2px solid #217346; color: #217346; font-weight: 700; }
.add { margin: 0 0 2px 33px; }
.sheetbar .dots { margin-left: auto; }
.hscroll { display: flex; width: 474px; margin: 6px 0 0 15px; height: 15px; }
.hscroll .thumb { flex: 417; }
.hscroll .track { flex: 28; }

.status { flex: none; display: flex; align-items: center; height: 21px; background: #f1f1f1; font-size: 11px; }
.ready { margin: 0 auto 0 7px; }
.view { width: 38px; height: 21px; }
.step { width: 8px; height: 8px; }
.view + .step { margin-left: 4px; }
.status input { width: 100px; height: 12px; margin: 0 4px 0 3px; appearance: none; background: linear-gradient(#aaa, #aaa) center / 100% 1px no-repeat; }
.status input::-webkit-slider-thumb { appearance: none; width: 4px; height: 12px; background: #555; }
.pct { width: 51px; padding-left: 14px; }
</style>
